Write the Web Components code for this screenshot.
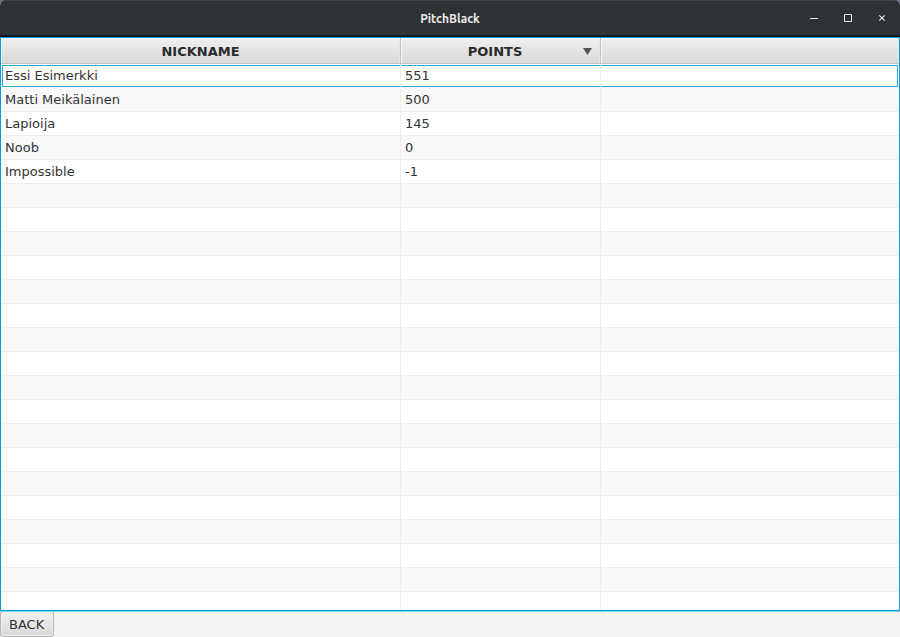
<!DOCTYPE html>
<html lang="en">
<head>
<meta charset="utf-8">
<title>PitchBlack</title>
<style>
html, body { height: 100%; margin: 0; }
body { background: #6b6b80; font: 13px/20px "DejaVu Sans", sans-serif; color: #333; }
</style>
</head>
<body>
<app-window>
  <title-bar slot="title">PitchBlack</title-bar>
  <score-table></score-table>
  <push-button slot="footer">BACK</push-button>
</app-window>
<script>
function attach(el, html) {
  const t = document.createElement('template');
  t.innerHTML = html;
  const root = el.attachShadow({ mode: 'open' });
  root.append(t.content.cloneNode(true));
  return root;
}

customElements.define('app-window', class extends HTMLElement {
  constructor() {
    super();
    attach(this, `
      <style>
        :host { display: flex; flex-direction: column; height: 100vh; overflow: hidden; border-radius: 6px 6px 0 0; background: #f3f3f3; }
        main { flex: 1; min-height: 0; display: flex; }
        footer { display: flex; flex: none; }
      </style>
      <slot name="title"></slot>
      <main><slot></slot></main>
      <footer><slot name="footer"></slot></footer>`);
  }
});

customElements.define('title-bar', class extends HTMLElement {
  constructor() {
    super();
    attach(this, `
      <style>
        :host { display: grid; grid-template-columns: 1fr auto 1fr; align-items: center; height: 37px; box-sizing: border-box; flex: none;
          background: #2d3234; border-top: 1px solid #3e4345; border-bottom: 1px solid #090a0a; box-shadow: inset 0 -1px #1b1e1f;
          color: #e8e8e3; }
        h1 { grid-column: 2; margin: 0; font: bold 12px/20px "Ubuntu", "Noto Sans", "Open Sans", sans-serif; }
        .controls { display: flex; justify-content: flex-end; gap: 10px; padding: 0 6px 2px 0; }
        button { width: 24px; height: 24px; padding: 0; border: 0; background: none; color: inherit; display: grid; place-items: center; }
        svg { width: 8px; height: 8px; display: block; fill: none; stroke: currentColor; }
      </style>
      <h1><slot></slot></h1>
      <div class="controls">
        <button aria-label="Minimize"><svg viewBox="0 0 8 8"><path d="M0 4.5h8"/></svg></button>
        <button aria-label="Maximize"><svg viewBox="0 0 8 8"><path d="M.5.5h7v7h-7z"/></svg></button>
        <button aria-label="Close"><svg viewBox="0 0 8 8"><path d="M1.3 1.3l5.4 5.4M6.7 1.3L1.3 6.7" stroke-width="1.2"/></svg></button>
      </div>`);
  }
});

customElements.define('score-table', class extends HTMLElement {
  constructor() {
    super();
    const root = attach(this, `
      <style>
        :host { display: block; flex: 1; min-width: 0; overflow: hidden; background: #fff; border: 1px solid #039ed3; box-shadow: 0 1px #86cde8; position: relative; z-index: 1; }
        table { width: 100%; table-layout: fixed; border-collapse: separate; border-spacing: 0; }
        .name { width: 400px; }
        .points { width: 200px; }
        th { height: 26px; box-sizing: border-box; padding: 0; background: linear-gradient(#f0f0f0, #d8d8d8);
          border-right: 1px solid #c3c3c3; border-bottom: 1px solid #c3c3c3; box-shadow: inset 1px 1px #f7f7f7, inset -1px 0 #e6e6e6; }
        th:last-child { border-right: 0; }
        th button { display: flex; align-items: center; box-sizing: border-box; width: 100%; height: 25px; padding: 2px 8px 0 6px; border: 0; background: none; color: #2b2b2b; font: bold 13px/20px "DejaVu Sans", sans-serif; }
        th.plain button { padding: 2px 0 0; }
        th span { flex: 1; text-align: center; }
        th svg { width: 9px; height: 7px; fill: #555; }
        td { height: 24px; box-sizing: border-box; padding: 0 4px; border-right: 1px solid #ededed; border-bottom: 1px solid #ededed; white-space: nowrap; line-height: 20px; }
        td:last-child { border-right: 0; }
        tr:nth-child(even) td { background: #f9f9f9; }
        tr.focused td { padding: 0; border-bottom-color: #f9f9f9; }
        tr.focused div { height: 20px; margin-top: 1px; padding: 0 4px; border: solid #2fa8d5; border-width: 1px 0; }
        tr.focused td:first-child div { margin-left: 1px; padding-left: 2px; border-left-width: 1px; }
        tr.focused td:last-child div { margin-right: 1px; border-right-width: 1px; }
      </style>
      <table>
        <colgroup><col class="name"><col class="points"><col></colgroup>
        <thead><tr>
          <th class="plain"><button><span>NICKNAME</span></button></th>
          <th aria-sort="descending"><button><span>POINTS</span><svg viewBox="0 0 9 7" aria-hidden="true"><path d="M0 0h9L4.5 7z"/></svg></button></th>
          <th></th>
        </tr></thead>
        <tbody></tbody>
      </table>`);
    const scores = [['Essi Esimerkki', 551], ['Matti Meikälainen', 500], ['Lapioija', 145], ['Noob', 0], ['Impossible', -1]];
    const body = root.querySelector('tbody');
    for (let i = 0; i < 60; i++) {
      const row = body.insertRow();
      if (i === 0) row.className = 'focused';
      for (let c = 0; c < 3; c++) {
        const box = document.createElement('div');
        box.textContent = scores[i]?.[c] ?? '';
        row.insertCell().append(box);
      }
    }
  }
});

customElements.define('push-button', class extends HTMLElement {
  constructor() {
    super();
    attach(this, `
      <style>
        :host { display: block; }
        button { display: block; height: 26px; padding: 2px 9px 0 8px; border: 1px solid #b5b5b5; border-radius: 3px; color: inherit; font: inherit;
          background: linear-gradient(#f0f0f0, #dadada); box-shadow: inset 0 0 0 1px #f0f0f0; }
      </style>
      <button><slot></slot></button>`);
  }
});
</script>
</body>
</html>
